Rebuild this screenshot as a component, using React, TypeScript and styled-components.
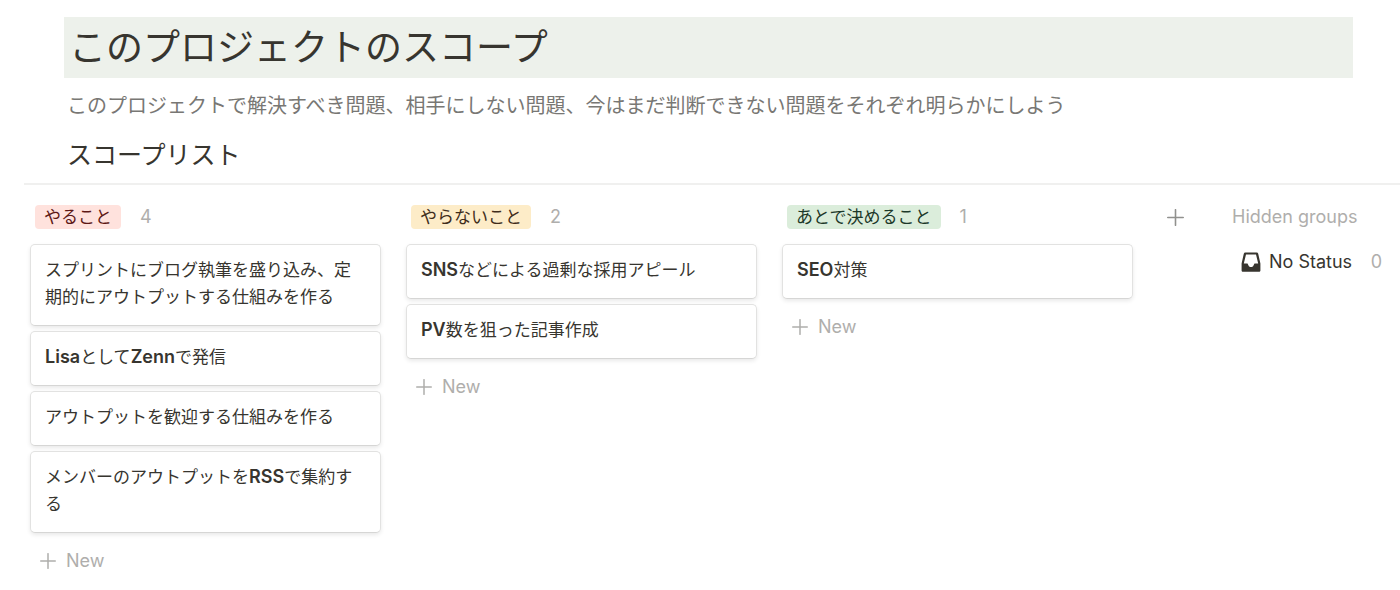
import React from "react";
import styled, { createGlobalStyle } from "styled-components";

const GlobalStyle = createGlobalStyle`
  *, *::before, *::after { box-sizing: border-box; }
  body {
    margin: 0;
    background: #fff;
    color: #37352f;
    font-family: Inter, "Noto Sans CJK JP", sans-serif;
    font-size: 17px;
    line-height: 27px;
  }
  h1, h2, h3, p, ul { margin: 0; padding: 0; font-weight: 400; }
  ul { list-style: none; }
  button {
    border: 0;
    padding: 0;
    background: none;
    font: inherit;
    cursor: pointer;
  }
`;

const Page = styled.main`
  padding: 17px 0 16px 24px;
`;

const Intro = styled.header`
  margin: 0 47px 0 40px;
`;

const Title = styled.h1`
  padding: 1px 5px 0;
  background: #edf1eb;
  font-size: 37px;
  line-height: 60px;
`;

const Lead = styled.p`
  margin-top: 13px;
  padding: 0 3px;
  color: #787774;
  font-size: 20px;
  line-height: 30px;
`;

const BoardTitle = styled.h2`
  margin-top: 16px;
  padding: 0 3px;
  font-size: 25px;
  line-height: 36px;
`;

const Board = styled.section`
  display: flex;
  align-items: flex-start;
  margin-top: 10px;
  padding: 20px 18px 0 6px;
  border-top: 2px solid #f0f0ef;
`;

const Columns = styled.div`
  display: grid;
  flex: 1;
  grid-template-columns: repeat(3, minmax(0, 1fr));
  gap: 25px;
  align-items: start;
`;

const GroupHeader = styled.div`
  display: flex;
  align-items: center;
  gap: 19px;
  height: 24px;
  margin: 0 5px 15px;
`;

const tones = {
  red: { background: "#ffe2dd", color: "#5d1715" },
  yellow: { background: "#fdecc8", color: "#402c1b" },
  green: { background: "#dbeddb", color: "#1c3829" },
};

type Tone = keyof typeof tones;

const Tag = styled.h3<{ $tone: Tone }>`
  padding: 0 9px;
  border-radius: 4px;
  background: ${({ $tone }) => tones[$tone].background};
  color: ${({ $tone }) => tones[$tone].color};
  font-size: 17px;
  line-height: 24px;
`;

const Count = styled.span`
  color: #afaeac;
  font-size: 18px;
  line-height: 24px;
`;

const Cards = styled.ul`
  display: grid;
  gap: 5px;
`;

const Card = styled.li`
  padding: 12px 14px 14px;
  border: 1px solid #e2e2e1;
  border-bottom-color: #d6d6d5;
  border-radius: 5px;
  background: #fff;
  box-shadow: 0 2px 4px rgba(15, 15, 15, 0.09);
`;

const Latin = styled.span`
  font-size: 18px;
  font-weight: 600;
  line-height: 1;
`;

const NewButton = styled.button`
  display: flex;
  align-items: center;
  gap: 10px;
  margin: 14px 10px 0;
  color: #afaeac;
  font-size: 18px;
  line-height: 28px;
`;

const AddGroup = styled.button`
  display: flex;
  align-items: center;
  justify-content: center;
  width: 34px;
  height: 24px;
  margin: 0 40px 0 25px;
  color: #91918e;
`;

const Hidden = styled.aside`
  width: 150px;
`;

const HiddenTitle = styled.h3`
  color: #afaeac;
  font-size: 18px;
  line-height: 24px;
  white-space: nowrap;
`;

const HiddenGroup = styled.div`
  display: flex;
  align-items: center;
  margin-top: 19px;
  padding-left: 9px;
`;

const HiddenName = styled.span`
  flex: 1;
  margin-left: 8px;
  font-size: 18px;
  line-height: 28px;
  white-space: nowrap;
`;

const Plus = ({ size = 16 }: { size?: number }) => (
  <svg width={size} height={size} viewBox="0 0 16 16" fill="none" stroke="currentColor" strokeWidth="1.5" strokeLinecap="round" aria-hidden="true">
    <path d="M8 .7v14.6M.7 8h14.6" />
  </svg>
);

const Inbox = () => (
  <svg width="20" height="20" viewBox="0 0 20 20" aria-hidden="true">
    <path
      fill="currentColor"
      fillRule="evenodd"
      d="M4.300 .6h11.400c.8 0 1.300.4 1.500 1.100L19.400 11.500v6.900c0 .8-.6 1.400-1.400 1.400H2c-.8 0-1.400-.6-1.400-1.400v-6.900L2.800 1.700C3 1 3.500.6 4.300.6zM5 2.400 2.800 11.500h3.700l1.400 2.800 1.100.8h2l1.100-.8 1.400-2.800h3.700L15 2.400z"
    />
  </svg>
);

/** Card text with its Latin words set heavier than the Japanese around them. */
const CardText = ({ text }: { text: string }) => (
  <>
    {text
      .split(/([A-Za-z]+)/)
      .filter(Boolean)
      .map((part, i) => (/^[A-Za-z]/.test(part) ? <Latin key={i}>{part}</Latin> : part))}
  </>
);

const groups: { name: string; tone: Tone; cards: string[] }[] = [
  {
    name: "やること",
    tone: "red",
    cards: [
      "スプリントにブログ執筆を盛り込み、定期的にアウトプットする仕組みを作る",
      "LisaとしてZennで発信",
      "アウトプットを歓迎する仕組みを作る",
      "メンバーのアウトプットをRSSで集約する",
    ],
  },
  {
    name: "やらないこと",
    tone: "yellow",
    cards: ["SNSなどによる過剰な採用アピール", "PV数を狙った記事作成"],
  },
  { name: "あとで決めること", tone: "green", cards: ["SEO対策"] },
];

export default function App() {
  return (
    <Page lang="ja">
      <GlobalStyle />
      <Intro>
        <Title>このプロジェクトのスコープ</Title>
        <Lead>このプロジェクトで解決すべき問題、相手にしない問題、今はまだ判断できない問題をそれぞれ明らかにしよう</Lead>
        <BoardTitle>スコープリスト</BoardTitle>
      </Intro>
      <Board>
        <Columns>
          {groups.map((group) => (
            <section key={group.name}>
              <GroupHeader>
                <Tag $tone={group.tone}>{group.name}</Tag>
                <Count>{group.cards.length}</Count>
              </GroupHeader>
              <Cards>
                {group.cards.map((card) => (
                  <Card key={card}>
                    <CardText text={card} />
                  </Card>
                ))}
              </Cards>
              <NewButton type="button">
                <Plus />
                New
              </NewButton>
            </section>
          ))}
        </Columns>
        <AddGroup type="button" aria-label="Add a group">
          <Plus size={17} />
        </AddGroup>
        <Hidden>
          <HiddenTitle>Hidden groups</HiddenTitle>
          <HiddenGroup>
            <Inbox />
            <HiddenName>No Status</HiddenName>
            <Count>0</Count>
          </HiddenGroup>
        </Hidden>
      </Board>
    </Page>
  );
}
